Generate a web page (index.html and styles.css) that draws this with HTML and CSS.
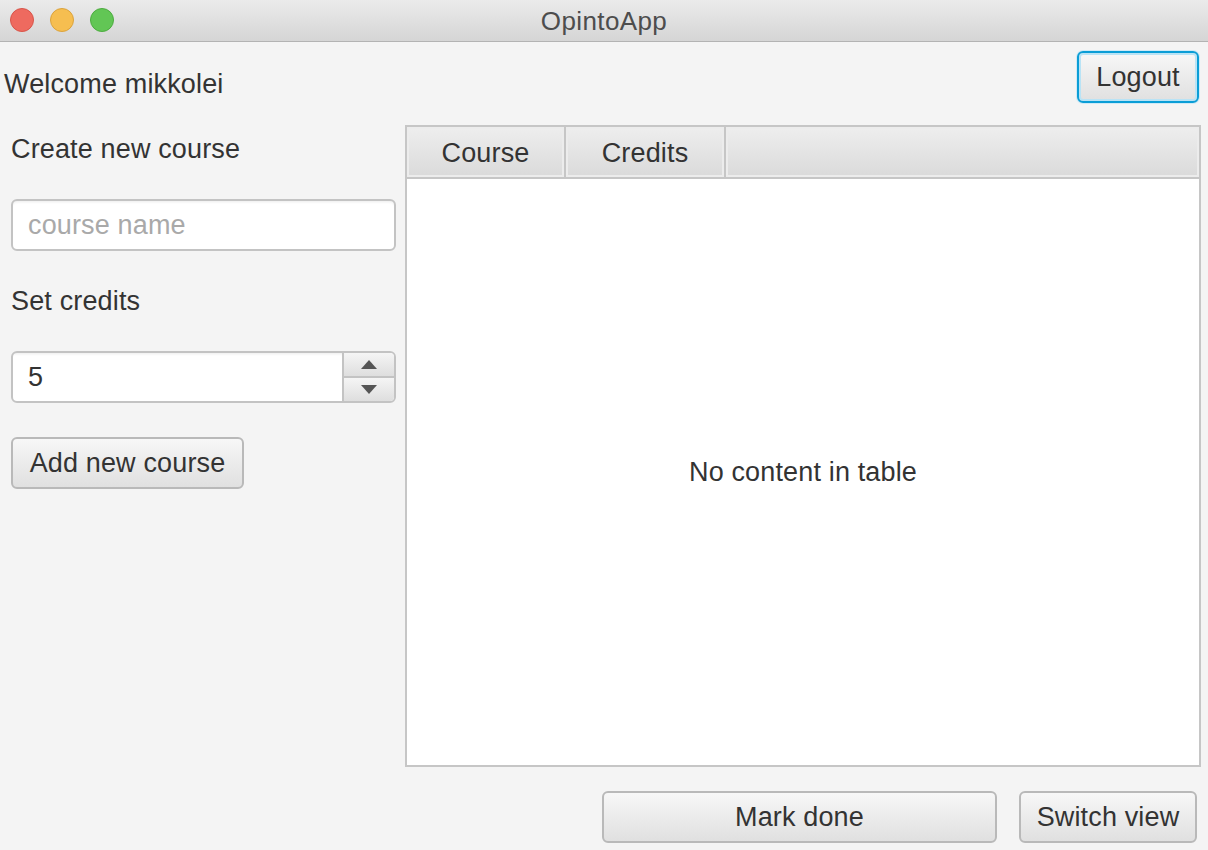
FILE: index.html
```html
<!DOCTYPE html>
<html>
<head>
<meta charset="utf-8">
<title>OpintoApp</title>
<link rel="stylesheet" href="styles.css">
</head>
<body>
<div class="titlebar">
  <div class="lights">
    <span class="light red"></span>
    <span class="light yellow"></span>
    <span class="light green"></span>
  </div>
  <div class="title">OpintoApp</div>
</div>
<div class="content">
  <div class="toprow">
    <div class="welcome">Welcome mikkolei</div>
    <button class="btn btn-focus">Logout</button>
  </div>
  <div class="main">
    <div class="left">
      <div class="label first">Create new course</div>
      <div class="field"><span class="placeholder">course name</span></div>
      <div class="label">Set credits</div>
      <div class="spinner">
        <div class="spin-value">5</div>
        <div class="spin-buttons">
          <div class="spin-btn"><span class="tri-up"></span></div>
          <div class="spin-btn"><span class="tri-down"></span></div>
        </div>
      </div>
      <button class="btn btn-add">Add new course</button>
    </div>
    <div class="table">
      <div class="thead">
        <div class="th col-course">Course</div>
        <div class="th col-credits">Credits</div>
        <div class="th col-filler"></div>
      </div>
      <div class="tbody">No content in table</div>
    </div>
  </div>
  <div class="bottom">
    <button class="btn btn-mark">Mark done</button>
    <button class="btn btn-switch">Switch view</button>
  </div>
</div>
</body>
</html>
```
FILE: styles.css
```css
* { box-sizing: border-box; }
html, body {
  margin: 0;
  padding: 0;
}
body {
  width: 1208px;
  height: 850px;
  overflow: hidden;
  background: #f4f4f4;
  font-family: "Liberation Sans", Arial, sans-serif;
  font-size: 27px;
  letter-spacing: 0.15px;
  color: #333333;
}
.titlebar {
  position: relative;
  height: 42px;
  background: linear-gradient(#ebebeb, #d5d5d5);
  border-bottom: 1px solid #b3b3b3;
  display: flex;
  align-items: center;
  justify-content: center;
}
.lights {
  position: absolute;
  left: 10px;
  top: 8px;
  display: flex;
  gap: 16px;
}
.light {
  width: 24px;
  height: 24px;
  border-radius: 50%;
  display: block;
}
.red { background: #ee6a5f; border: 1px solid #d8554a; }
.yellow { background: #f6be50; border: 1px solid #dba33c; }
.green { background: #62c655; border: 1px solid #4dac40; }
.title {
  color: #4d4d4d;
  font-size: 26px;
  letter-spacing: 0.4px;
  line-height: 30px;
  padding-top: 1px;
}
.content {
  display: flex;
  flex-direction: column;
}
.toprow {
  display: flex;
  justify-content: space-between;
  align-items: flex-start;
  padding: 9px 9px 0 4px;
  height: 83px;
}
.welcome {
  margin-top: 18px;
  line-height: 30px;
}
.btn {
  font-family: "Liberation Sans", Arial, sans-serif;
  font-size: 27px;
  letter-spacing: 0.15px;
  color: #333333;
  height: 52px;
  border: 2px solid #b9b9b9;
  border-radius: 6px;
  background: linear-gradient(#f7f7f7, #e0e0e0);
  padding: 0 16px;
  line-height: 46px;
  margin: 0;
}
.btn-focus {
  border-color: #0a9dd6;
  box-shadow: inset 0 0 0 2px #b9e3f5, 0 0 0 1px #cfeaf6;
  width: 122px;
  padding: 0;
}
.main {
  display: flex;
  height: 642px;
}
.left {
  width: 405px;
  padding: 0 10px 0 11px;
  display: flex;
  flex-direction: column;
  align-items: flex-start;
}
.label {
  line-height: 30px;
  margin-top: 35px;
  margin-bottom: 35px;
}
.label.first {
  margin-top: 9px;
}
.field {
  width: 385px;
  height: 52px;
  background: #fff;
  border: 2px solid #c3c3c3;
  border-radius: 6px;
  box-shadow: inset 0 3px 3px -2px rgba(0,0,0,0.08);
  padding-left: 15px;
  display: flex;
  align-items: center;
}
.placeholder { color: #a9a9a9; }
.spinner {
  width: 385px;
  height: 52px;
  display: flex;
  border: 2px solid #c3c3c3;
  border-radius: 6px;
  background: #fff;
  overflow: hidden;
}
.spin-value {
  flex: 1;
  padding-left: 15px;
  display: flex;
  align-items: center;
  box-shadow: inset 0 3px 3px -2px rgba(0,0,0,0.08);
}
.spin-buttons {
  width: 52px;
  border-left: 2px solid #c3c3c3;
  display: flex;
  flex-direction: column;
}
.spin-btn {
  flex: 1;
  background: linear-gradient(#f5f5f5, #dedede);
  display: flex;
  align-items: center;
  justify-content: center;
}
.spin-btn + .spin-btn {
  border-top: 2px solid #c3c3c3;
}
.tri-up {
  width: 0; height: 0;
  border-left: 8px solid transparent;
  border-right: 8px solid transparent;
  border-bottom: 9px solid #555;
}
.tri-down {
  width: 0; height: 0;
  border-left: 8px solid transparent;
  border-right: 8px solid transparent;
  border-top: 9px solid #555;
}
.btn-add {
  margin-top: 34px;
  width: 233px;
  padding: 0;
}
.table {
  width: 796px;
  height: 642px;
  border: 2px solid #c6c6c6;
  background: #fff;
  display: flex;
  flex-direction: column;
}
.thead {
  display: flex;
  height: 52px;
  background: #c6c6c6;
  gap: 2px;
  border-bottom: 2px solid #c6c6c6;
}
.th {
  height: 50px;
  background: linear-gradient(#eeeeee, #dadada);
  box-shadow: inset 0 0 0 2px #ececec;
  display: flex;
  align-items: center;
  justify-content: center;
  padding-top: 2px;
}
.col-course { width: 157px; }
.col-credits { width: 158px; }
.col-filler { flex: 1; }
.tbody {
  flex: 1;
  display: flex;
  align-items: center;
  justify-content: center;
}
.bottom {
  display: flex;
  justify-content: flex-end;
  gap: 22px;
  padding: 24px 11px 0 0;
}
.btn-mark { width: 395px; }
.btn-switch { width: 178px; padding: 0; }
```
